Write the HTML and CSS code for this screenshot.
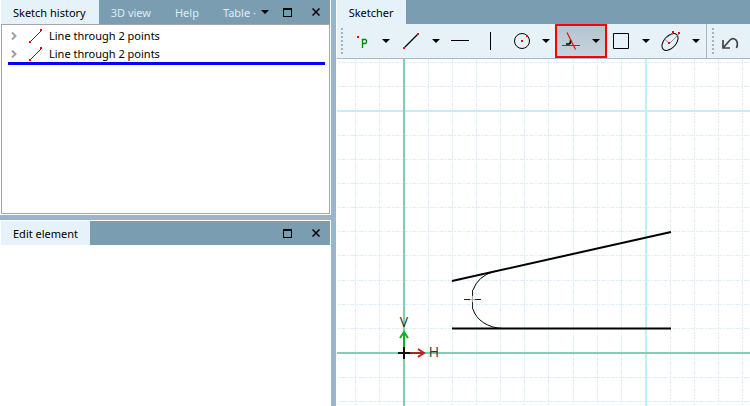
FILE: index.html
```html
<!DOCTYPE html>
<html lang="en">
<head>
<meta charset="utf-8">
<title>Sketcher</title>
<link rel="stylesheet" href="styles.css">
</head>
<body>
<svg class="defs" aria-hidden="true">
  <symbol id="down" viewBox="0 0 8 4"><path d="M0 0h8L4 4z"/></symbol>
  <symbol id="max" viewBox="0 0 9 9"><path d="M0 0h9v9H0zM1 2v6h7V2z" fill-rule="evenodd"/></symbol>
  <symbol id="close" viewBox="0 0 8 8"><path d="M0.5 0.5l7 7M7.5 0.5l-7 7" stroke="#000" stroke-width="1.5"/></symbol>
  <symbol id="chevron" viewBox="0 0 6 8"><path d="M1 0.5L4.5 4L1 7.5" fill="none" stroke="#a0a0a0" stroke-width="2"/></symbol>
  <symbol id="segment" viewBox="0 0 14 14"><path d="M1 13L13 1" stroke="#333"/><path d="M0 12h2v2H0zM11 0h2v2h-2z" fill="#f00"/></symbol>
</svg>
<main class="workspace">
  <div class="side">
    <section class="panel history">
      <header class="bar">
        <nav class="tabs">
          <button class="tab active">Sketch history</button>
          <button class="tab">3D view</button>
          <button class="tab">Help</button>
          <button class="tab">Table ·</button>
        </nav>
        <div class="controls">
          <button class="more" aria-label="More tabs"><svg width="8" height="4"><use href="#down"/></svg></button>
          <button aria-label="Maximize"><svg width="9" height="9"><use href="#max"/></svg></button>
          <button aria-label="Close"><svg width="8" height="8"><use href="#close"/></svg></button>
        </div>
      </header>
      <ul class="tree">
        <li><button class="expand" aria-label="Expand"><svg width="6" height="8"><use href="#chevron"/></svg></button><svg width="14" height="14"><use href="#segment"/></svg><span>Line through 2 points</span></li>
        <li><button class="expand" aria-label="Expand"><svg width="6" height="8"><use href="#chevron"/></svg></button><svg width="14" height="14"><use href="#segment"/></svg><span>Line through 2 points</span></li>
      </ul>
    </section>
    <section class="panel edit">
      <header class="bar">
        <nav class="tabs"><button class="tab active">Edit element</button></nav>
        <div class="controls">
          <button aria-label="Maximize"><svg width="9" height="9"><use href="#max"/></svg></button>
          <button aria-label="Close"><svg width="8" height="8"><use href="#close"/></svg></button>
        </div>
      </header>
    </section>
  </div>
  <section class="sketcher">
    <header class="bar"><nav class="tabs"><button class="tab active">Sketcher</button></nav></header>
    <div class="toolbar">
      <div class="grip"></div>
      <div class="tools">
        <div class="split">
          <button class="tool" aria-label="Point"><svg width="20" height="20"><path d="M6 5h2v2H6z" fill="#f00"/><path d="M11.500 17V8.500h3l1 1v2l-1 1h-3" fill="none" stroke="#00801a" stroke-width="1.3"/></svg></button>
          <button class="drop" aria-label="Point options"><svg width="8" height="4"><use href="#down"/></svg></button>
        </div>
        <div class="split">
          <button class="tool" aria-label="Line"><svg width="20" height="20"><path d="M3 17L17 3" stroke="#000" stroke-width="1.2"/><path d="M2 16h2v2H2zM16 2h2v2h-2z" fill="#f00"/></svg></button>
          <button class="drop" aria-label="Line options"><svg width="8" height="4"><use href="#down"/></svg></button>
        </div>
        <button class="tool" aria-label="Horizontal line"><svg width="20" height="20"><path d="M0 9h18v1H0z"/></svg></button>
        <button class="tool" aria-label="Vertical line"><svg width="20" height="20"><path d="M9 1h1v18H9z"/></svg></button>
        <div class="split">
          <button class="tool" aria-label="Circle"><svg width="20" height="20"><circle cx="11" cy="10" r="7.500" fill="none" stroke="#000"/><path d="M10 9h2v2h-2zM15 4h2v2h-2z" fill="#f00"/></svg></button>
          <button class="drop" aria-label="Circle options"><svg width="8" height="4"><use href="#down"/></svg></button>
        </div>
        <div class="split selected">
          <button class="tool" aria-label="Fillet"><svg width="20" height="20"><path d="M5 13h3q2-.5 1.500-4" fill="none" stroke="#000" stroke-width="1.500"/><path d="M6 1.500L14.500 18.500M1 14.500h18" fill="none" stroke="#f00" stroke-width="1.200"/></svg></button>
          <button class="drop" aria-label="Fillet options"><svg width="8" height="4"><use href="#down"/></svg></button>
        </div>
        <div class="split">
          <button class="tool" aria-label="Rectangle"><svg width="20" height="20"><path d="M2.500 2.500h15v15h-15z" fill="none" stroke="#000"/></svg></button>
          <button class="drop" aria-label="Rectangle options"><svg width="8" height="4"><use href="#down"/></svg></button>
        </div>
        <div class="split">
          <button class="tool" aria-label="Ellipse"><svg width="20" height="20"><ellipse cx="9" cy="11" rx="10" ry="6" transform="rotate(-48 9 11)" fill="none" stroke="#000"/><path d="M8.500 12.500L3.500 8L13 1.500M8.500 12.500L18 3" fill="none" stroke="#777" stroke-width=".8"/><path d="M7 11h2v2H7zM11 0h2v2h-2zM17 1h2v2h-2z" fill="#f00"/></svg></button>
          <button class="drop" aria-label="Ellipse options"><svg width="8" height="4"><use href="#down"/></svg></button>
        </div>
      </div>
      <div class="grip"></div>
      <button class="tool undo" aria-label="Undo"><svg width="20" height="20"><path d="M3 9v8h7M3.500 16.500L10 9q3-3 6 0 2.500 3 .5 8" fill="none" stroke="#444" stroke-width="1.7"/></svg></button>
    </div>
    <div class="canvas">
      <svg width="100%" height="100%" role="img" aria-label="Sketch with two lines and a fillet preview">
        <defs>
          <pattern id="grid" x="66" y="51" width="242" height="242" patternUnits="userSpaceOnUse">
            <path d="M25.500 0V242M49.500 0V242M73.500 0V242M97.500 0V242M121.500 0V242M145.500 0V242M170.500 0V242M194.500 0V242M218.500 0V242M0 25.500H242M0 49.500H242M0 73.500H242M0 97.500H242M0 121.500H242M0 145.500H242M0 170.500H242M0 194.500H242M0 218.500H242" stroke="#dfeff8" stroke-dasharray="5 1 2 1"/>
            <path d="M0 0h2v242H0zM0 0h242v2H0z" fill="#c2edf9"/>
          </pattern>
        </defs>
        <rect width="100%" height="100%" fill="url(#grid)"/>
        <path d="M67 0V2000M0 294H4000" stroke="#80ceb3" stroke-width="2"/>
        <g fill="none" stroke="#000">
          <path d="M115 222L334 173M115 269.500H334" stroke-width="2"/>
          <path d="M157 212.500Q141 217 136 231M136 250C139 261 151 269 166 269.500"/>
          <path d="M135.500 231V237M135.500 243V250M127 240.500H133M138 240.500H144" stroke="#222"/>
          <path d="M133 240.500H138M135.500 237V243" stroke="#aaa"/>
        </g>
        <path d="M67 288V274M63 279L67 273L71 279" fill="none" stroke="#16ae24" stroke-width="2"/>
        <path d="M73 294H87M81 290L87 294L81 298" fill="none" stroke="#b02424" stroke-width="2"/>
        <path d="M61 294H73M67 288V300" stroke="#111" stroke-width="2"/>
        <text class="axis" x="67" y="268">V</text>
        <text class="axis" x="97" y="298">H</text>
      </svg>
    </div>
  </section>
</main>
</body>
</html>
```
FILE: styles.css
```css
* { box-sizing: border-box; }
body { margin: 0; font: 11px/16px "Noto Sans", "Open Sans", sans-serif; color: #000; }
button { margin: 0; padding: 0; border: 0; background: none; font: inherit; color: inherit; }
svg { display: block; flex: none; }
.defs { position: absolute; width: 0; height: 0; }
.workspace { display: grid; grid-template-columns: minmax(0, 79fr) minmax(0, 99fr); gap: 5px; height: 100vh; background: #9ab4cb; }
.side { display: grid; grid-template-rows: minmax(0, 215fr) minmax(0, 186fr); gap: 5px; min-width: 0; }
.panel { display: flex; flex-direction: column; min-width: 0; background: #fff; padding: 0 1px 1px; }
.edit { padding-top: 1px; }
.bar { display: flex; flex: none; justify-content: space-between; height: 24px; background: #7b9db2; }
.tabs { display: flex; }
.tab { padding: 2px 12px 0; color: #dfebf4; white-space: nowrap; }
.tab.active { background: #e6f2f9; color: #000; }
.controls { display: flex; align-items: center; gap: 20px; padding-right: 10px; }
.history .tab:last-child { padding-right: 0; }
.history .tab.active { padding-right: 13px; }
.more { margin-right: -6px; }
.tree { flex: 1; margin: 0; padding: 2px 4px 0 6px; border: 1px solid #a6a6a6; list-style: none; }
.tree li { display: flex; align-items: center; height: 18px; }
.tree li:last-child { height: 20px; border-bottom: 3px solid #00f; }
.expand { margin: 0 12px 0 3px; }
.tree span { margin-left: 6px; }
.sketcher { display: flex; flex-direction: column; min-width: 0; background: #fff; padding-left: 1px; }
.sketcher .tab { min-width: 69px; }
.toolbar { display: flex; flex: none; align-items: center; height: 35px; padding-left: 4px; overflow: hidden; background: #e6f1f8; border-bottom: 1px solid #a9b8c2; }
.grip { flex: none; width: 2px; height: 26px; background: repeating-linear-gradient(#a9b3ba 0 2px, transparent 2px 4px); }
.tools { display: flex; align-items: center; height: 100%; margin: 0 5px 0 3px; border-right: 1px solid #a9b8c2; }
.tool { display: flex; flex: none; align-items: center; justify-content: center; width: 30px; height: 32px; }
.split { display: flex; flex: none; width: 50px; }
.drop { display: flex; align-items: center; justify-content: center; width: 22px; }
.split.selected { outline: 2px solid #f00; outline-offset: -1px; background: linear-gradient(#b4c4cf, #c6d4dd); }
.undo { margin-left: 1px; }
.canvas { flex: 1; min-height: 0; overflow: hidden; }
.axis { font: 14px "Open Sans", sans-serif; fill: #333; text-anchor: middle; }
```
